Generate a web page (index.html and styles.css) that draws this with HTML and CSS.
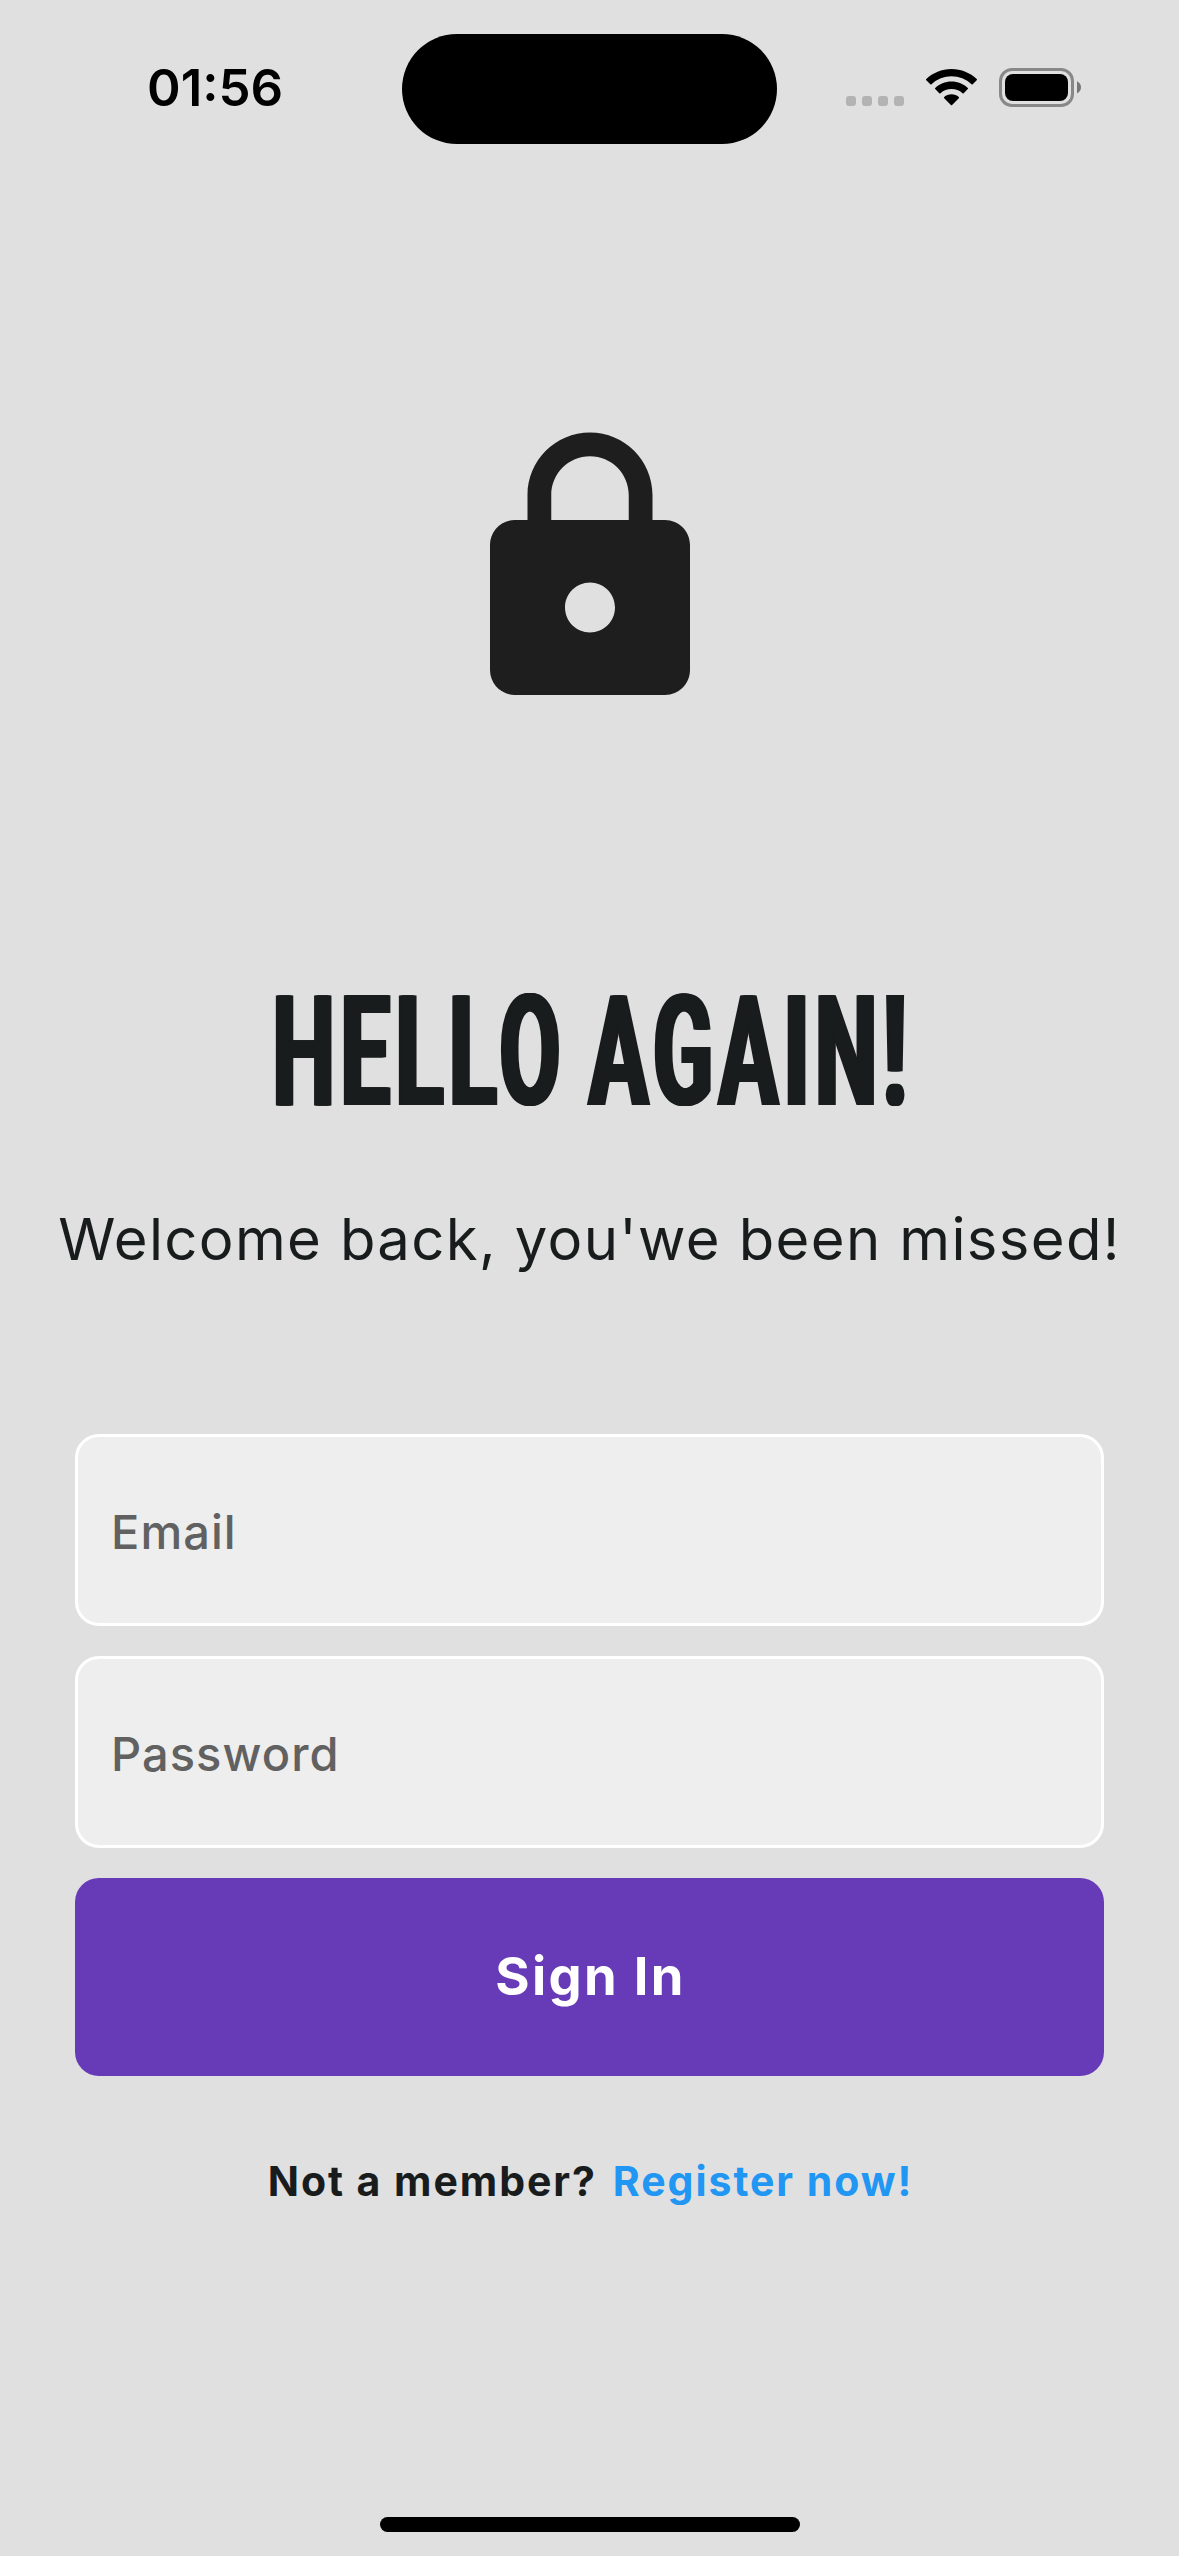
FILE: index.html
```html
<!DOCTYPE html>
<html lang="en">
<head>
<meta charset="utf-8">
<title>Sign In</title>
<link rel="stylesheet" href="styles.css">
</head>
<body>
<div class="screen">
  <header class="status-bar">
    <span class="time">01:56</span>
    <div class="island"></div>
    <div class="indicators">
      <svg class="cellular" viewBox="0 0 58 10" width="58" height="10"><rect width="10" height="10" rx="3"/><rect x="16" width="10" height="10" rx="3"/><rect x="32" width="10" height="10" rx="3"/><rect x="48" width="10" height="10" rx="3"/></svg>
      <svg class="wifi" viewBox="0 0 51 37" width="51" height="37"><path d="M25.5 0C35.300 0 44.200 3.800 50.700 10.100Q51.300 10.700 50.700 11.300L46.700 15.300Q46.100 15.900 45.500 15.300A29 29 0 0 0 5.500 15.300Q4.900 15.900 4.300 15.300L.3 11.300Q-.3 10.700 .3 10.100C6.800 3.800 15.700 0 25.500 0Z"/><path d="M25.500 12.400C31.900 12.400 37.600 14.900 41.800 18.900Q42.400 19.500 41.800 20.100L37.700 24.200Q37.100 24.800 36.500 24.200A16.500 16.500 0 0 0 14.500 24.200Q13.900 24.800 13.300 24.200L9.200 20.100Q8.600 19.500 9.200 18.900C13.400 14.900 19.100 12.400 25.500 12.400Z"/><path d="M25.500 25.300C28.300 25.300 30.900 26.300 32.800 28Q33.400 28.600 32.800 29.200L26.100 36Q25.500 36.600 24.900 36L18.200 29.200Q17.600 28.600 18.200 28C20.100 26.300 22.700 25.300 25.500 25.300Z"/></svg>
      <svg class="battery" viewBox="0 0 82 39" width="82" height="39"><rect x="1.500" y="1.500" width="72" height="36" rx="11.500" fill="none" stroke="#888" stroke-width="3"/><rect x="6" y="6" width="63" height="27" rx="8"/><path d="M78 13.200Q82 15.300 82 19.300T78 25.400Z" fill="#777"/></svg>
    </div>
  </header>
  <main class="content">
    <svg class="lock" viewBox="0 0 24 24" width="300" height="300"><path d="M18 8h-1V6c0-2.760-2.240-5-5-5S7 3.240 7 6v2H6c-1.100 0-2 .9-2 2v10c0 1.100.9 2 2 2h12c1.100 0 2-.9 2-2V10c0-1.100-.9-2-2-2zm-6 9c-1.100 0-2-.9-2-2s.9-2 2-2 2 .9 2 2-.9 2-2 2zm3.100-9H8.900V6c0-1.710 1.390-3.100 3.100-3.100s3.100 1.390 3.100 3.100v2z"/></svg>
    <h1 class="title">HELLO AGAIN!</h1>
    <p class="subtitle">Welcome back, you'we been missed!</p>
    <div class="form">
      <div class="field">Email</div>
      <div class="field">Password</div>
      <div class="button">Sign In</div>
    </div>
    <p class="register"><span>Not a member?</span><a class="link">Register now!</a></p>
  </main>
  <div class="home-indicator"></div>
</div>
</body>
</html>
```
FILE: styles.css
```css
* { box-sizing: border-box; }
body { margin: 0; background: #e0e0e0; font-family: Inter, "Liberation Sans", sans-serif; }
.screen { width: 1179px; height: 2556px; display: flex; flex-direction: column; align-items: center; overflow: hidden; }
.status-bar { width: 100%; height: 144px; padding: 34px 98px 0 147px; display: grid; grid-template-columns: 255px 375px 1fr; }
.time { font-size: 51px; font-weight: 600; line-height: 60px; margin-top: 24px; white-space: nowrap; letter-spacing: 0; }
.island { height: 110px; border-radius: 55px; background: #000; }
.indicators { display: flex; justify-content: flex-end; align-items: flex-start; padding-top: 34px; }
.cellular { fill: #b3b3b3; margin: 28px 22px 0 0; }
.wifi { margin: 1px 22px 0 0; }
.content { width: 1029px; display: flex; flex-direction: column; align-items: center; padding-top: 276px; }
.lock { fill: #1e1e1e; }
.title { margin: 243px 0 0; padding-left: 9px; height: 180px; line-height: 180px; font-family: Roboto, sans-serif; font-size: 153.500px; font-weight: 700; color: #191c1d; white-space: nowrap; transform: scaleX(.575); text-shadow: 2px 0 #191c1d, -2px 0 #191c1d, 4px 0 #191c1d, -4px 0 #191c1d; letter-spacing: 9.700px; word-spacing: -8px; }
.subtitle { margin: 56px 0 0; font-size: 58px; line-height: 80px; color: #191c1d; white-space: nowrap; letter-spacing: 1.360px; }
.form { width: 100%; margin-top: 155px; display: flex; flex-direction: column; gap: 30px; }
.field { height: 192px; border: 3px solid #fff; border-radius: 24px; background: #eee; padding-left: 33px; font-size: 47px; font-weight: 450; line-height: 190px; color: #616161; letter-spacing: 1.050px; }
.button { height: 198px; border-radius: 24px; padding-left: 2px; background: #673ab7; color: #fff; font-size: 52.500px; font-weight: 700; line-height: 196px; text-align: center; letter-spacing: 2.300px; }
.register { margin: 75px 0 0; padding-left: 2px; display: flex; gap: 16px; font-size: 41px; font-weight: 650; line-height: 60px; color: #191c1d; white-space: nowrap; letter-spacing: 1.950px; }
.link { color: #2196f3; }
.home-indicator { width: 420px; height: 15px; border-radius: 8px; background: #000; margin: auto 0 24px; }
```
